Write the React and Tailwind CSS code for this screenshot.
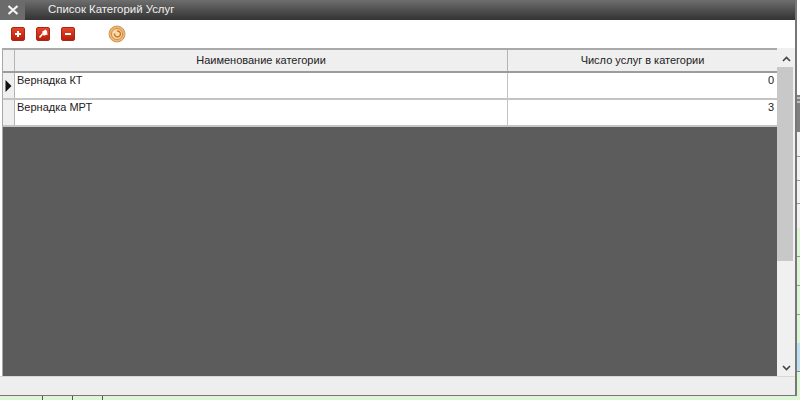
const font = { fontFamily: '"Liberation Sans", Arial, sans-serif' }

const rows = [
  { name: 'Вернадка КТ', count: 0, current: true },
  { name: 'Вернадка МРТ', count: 3 },
]

function ToolButton({ children, className = '' }) {
  return (
    <div className={`flex h-[14px] w-[14px] items-center justify-center rounded-[2px] border border-[#a52a14] bg-gradient-to-b from-[#e8432a] to-[#b81e0c] ${className}`}>
      <svg width="10" height="10" viewBox="0 0 10 10">{children}</svg>
    </div>
  )
}

function App() {
  return (
    <div style={font} className="flex h-[400px] w-[800px] flex-col overflow-hidden bg-white text-[11px] text-[#222]">
      <div className="flex h-[396px] min-h-0">
        <div className="flex w-[797px] shrink-0 flex-col border-r-2 border-b border-[#777777] bg-white">
          {/* title bar */}
          <div className="flex h-[20px] shrink-0 items-center bg-gradient-to-b from-[#6e6e6e] to-[#333333] text-[11.4px] text-[#f0f0f0]">
            <div className="flex h-full w-[25px] items-center justify-center bg-[#6b6b6b]">
              <svg width="12" height="10" viewBox="0 0 12 10">
                <path d="M1.5 1 L10.5 9 M10.5 1 L1.5 9" stroke="#f4f4f4" strokeWidth="2.2" />
              </svg>
            </div>
            <span className="ml-[23px]">Список Категорий Услуг</span>
          </div>

          {/* toolbar */}
          <div className="flex h-[28px] shrink-0 items-center pl-[11px]">
            <ToolButton>
              <path d="M5 2 V8 M2 5 H8" stroke="#fff" strokeWidth="2" />
            </ToolButton>
            <ToolButton className="ml-[11px]">
              <path d="M1.5 8.5 L5 4.5 M4.5 3.5 L7.5 1.5 L8.5 3 L7 4 L8.5 5 L5.5 6" stroke="#fff" strokeWidth="1.6" fill="#fff" />
            </ToolButton>
            <ToolButton className="ml-[11px]">
              <path d="M2 5 H8" stroke="#fff" strokeWidth="2" />
            </ToolButton>
            <svg className="ml-[33px]" width="18" height="18" viewBox="0 0 18 18">
              <circle cx="9" cy="9" r="8" fill="#e9b878" stroke="#d09a58" />
              <circle cx="9" cy="9" r="5.5" fill="#f7dcae" stroke="#d8893a" />
              <path d="M6.5 8.5 A3 3 0 1 0 9 6" fill="none" stroke="#d0701c" strokeWidth="1.4" />
            </svg>
          </div>

          {/* grid + scrollbar */}
          <div className="flex min-h-0 flex-1 pl-[2px]">
            <div className="flex min-w-0 flex-1 flex-col border-t-2 border-l border-[#a9a9a9] bg-[#5c5c5c]">
              <div className="flex h-[23px] shrink-0 border-b-2 border-[#9c9c9c] bg-[#efefef]">
                <div className="w-[12px] shrink-0 border-r border-[#b5b5b5]" />
                <div className="flex w-[493px] shrink-0 items-center justify-center border-r border-[#b5b5b5]">Наименование категории</div>
                <div className="flex flex-1 items-center justify-center">Число услуг в категории</div>
              </div>
              {rows.map((row) => (
                <div key={row.name} className="flex h-[27px] shrink-0 border-b-2 border-[#c4c4c4] bg-white">
                  <div className="flex w-[12px] shrink-0 items-center justify-center border-r border-[#b5b5b5] bg-[#efefef]">
                    {row.current && (
                      <svg width="7" height="12" viewBox="0 0 7 12">
                        <path d="M0.5 0 L6.5 6 L0.5 12 Z" fill="#111" />
                      </svg>
                    )}
                  </div>
                  <div className="w-[493px] shrink-0 border-r border-[#c4c4c4] pl-[2px] leading-[14px]">{row.name}</div>
                  <div className="flex-1 pr-[3px] text-right leading-[14px]">{row.count}</div>
                </div>
              ))}
            </div>

            {/* scrollbar */}
            <div className="flex w-[18px] shrink-0 flex-col border-t-2 border-[#f0f0f0] bg-[#f0f0f0]">
              <div className="flex h-[17px] shrink-0 items-center justify-center">
                <svg width="9" height="6" viewBox="0 0 9 6">
                  <path d="M1 5 L4.5 1.5 L8 5" fill="none" stroke="#444" strokeWidth="1.6" />
                </svg>
              </div>
              <div className="mr-[2px] h-[194px] shrink-0 bg-[#c8c8c8]" />
              <div className="flex-1" />
              <div className="flex h-[17px] shrink-0 items-center justify-center">
                <svg width="9" height="6" viewBox="0 0 9 6">
                  <path d="M1 1 L4.5 4.5 L8 1" fill="none" stroke="#444" strokeWidth="1.6" />
                </svg>
              </div>
            </div>
          </div>

          {/* status bar */}
          <div className="h-[19px] shrink-0 border-t border-[#d8d8d8] bg-[#eeeeee]" />
        </div>

        {/* what shows of the window behind */}
        <div className="flex flex-1 flex-col">
          <div className="h-[95px] bg-white" />
          <div className="flex h-[37px] flex-col bg-[#808080]">
            <div className="mt-[2px] h-[2px] bg-[#c0c0c0]" />
            <div className="mt-[2px] h-[2px] bg-[#c0c0c0]" />
          </div>
          <div className="h-[25px] border-b border-[#999] bg-[#f2f2f2]" />
          <div className="h-[24px] border-b border-[#999] bg-[#f2f2f2]" />
          <div className="h-[23px] border-b border-[#999] bg-[#f2f2f2]" />
          <div className="h-[24px] bg-[#f2f2f2]" />
          <div className="h-[29px] border-b border-[#999] bg-[#dcf5d4]" />
          <div className="h-[29px] border-b border-[#999] bg-[#dcf5d4]" />
          <div className="h-[29px] border-b border-[#999] bg-[#dcf5d4]" />
          <div className="h-[28px] bg-[#dcf5d4]" />
          <div className="h-[29px] border-b border-[#888] bg-[#bfe0f2]" />
          <div className="flex-1 bg-[#dcf5d4]" />
        </div>
      </div>

      {/* bottom strip of the window behind */}
      <div className="flex h-[4px] shrink-0 bg-[#dcf5d4]">
        <div className="w-[43px] border-r border-[#555]" />
        <div className="w-[30px] border-r border-[#555]" />
        <div className="w-[30px] border-r border-[#555]" />
      </div>
    </div>
  )
}

export default App
